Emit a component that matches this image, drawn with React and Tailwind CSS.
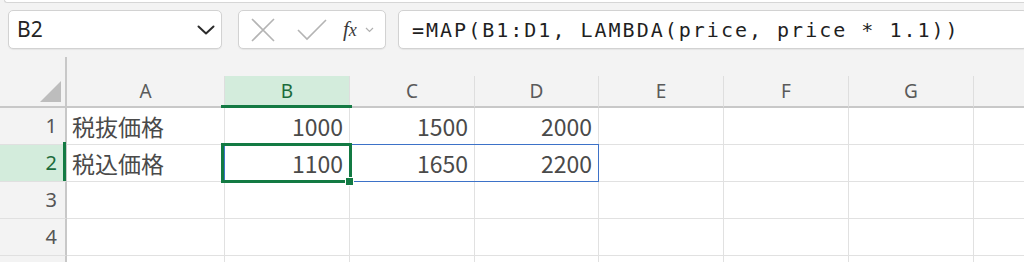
import React from 'react';

const columns = [
  { key: 'A', width: 158 },
  { key: 'B', width: 125 },
  { key: 'C', width: 125 },
  { key: 'D', width: 124 },
  { key: 'E', width: 125 },
  { key: 'F', width: 125 },
  { key: 'G', width: 125 },
  { key: 'H', width: 200, hidden: true },
];

const rows = [
  { n: 1, cells: { A: '税抜価格', B: '1000', C: '1500', D: '2000' } },
  { n: 2, cells: { A: '税込価格', B: '1100', C: '1650', D: '2200' } },
  { n: 3, cells: {} },
  { n: 4, cells: {} },
  { n: 5, cells: {}, hidden: true },
];

const cellFont = { fontFamily: '"Noto Sans CJK JP", "Noto Sans", sans-serif' };

function Toolbar() {
  return (
    <div className="mt-[7px] flex h-[39px] items-stretch pl-[8px]">
      <div className="flex w-[214px] items-center justify-between rounded-[5px] border border-[#d2d2d2] bg-white pl-[8px] pr-[6px] shadow-[0_1px_1px_rgba(0,0,0,0.06)]">
        <span className="text-[21px] text-[#242424]" style={{ fontFamily: '"Noto Sans", sans-serif' }}>B2</span>
        <svg width="18" height="10" viewBox="0 0 18 10" fill="none">
          <path d="M1.5 1.5 L9 8.5 L16.5 1.5" stroke="#2b2b2b" strokeWidth="2" strokeLinecap="round" strokeLinejoin="round" />
        </svg>
      </div>
      <div className="ml-[16px] flex w-[148px] items-center rounded-[5px] border border-[#d2d2d2] bg-white shadow-[0_1px_1px_rgba(0,0,0,0.06)]">
        <svg className="ml-[12px]" width="24" height="24" viewBox="0 0 24 24" fill="none">
          <path d="M1 1 L23 23 M23 1 L1 23" stroke="#b4b4b4" strokeWidth="1.6" />
        </svg>
        <svg className="ml-[22px]" width="30" height="22" viewBox="0 0 30 22" fill="none">
          <path d="M1 11 L10 20 L29 1" stroke="#b4b4b4" strokeWidth="1.6" />
        </svg>
        <span
          className="ml-[16px] text-[21px] italic leading-none text-[#3a3a3a]"
          style={{ fontFamily: '"Liberation Serif", serif' }}
        >
          f<span className="text-[18px]">x</span>
        </span>
        <svg className="ml-[8px]" width="9" height="6" viewBox="0 0 9 6" fill="none">
          <path d="M1 1 L4.5 4.5 L8 1" stroke="#b0b0b0" strokeWidth="1.2" />
        </svg>
      </div>
      <div className="-mr-[4px] ml-[12px] flex flex-1 items-center rounded-[5px] border border-[#d2d2d2] bg-white pl-[13px] shadow-[0_1px_1px_rgba(0,0,0,0.06)]">
        <span
          className="whitespace-nowrap text-[20px] tracking-[2px] text-[#1f1f1f]"
          style={{ fontFamily: '"DejaVu Sans Mono", monospace' }}
        >
          =MAP(B1:D1, LAMBDA(price, price * 1.1))
        </span>
      </div>
    </div>
  );
}

function HeaderRow() {
  return (
    <div className="flex h-[59px] items-end">
      <div className="flex h-[51px] w-[67px] shrink-0 items-end justify-end border-b-2 border-r-2 border-[#c8c8c8] pb-[4px] pr-[4px]">
        <div className="h-[21px] w-[21px] bg-[#bdbdbd] [clip-path:polygon(100%_0,100%_100%,0_100%)]" />
      </div>
      {columns.map((col) => {
        const active = col.key === 'B';
        return (
          <div
            key={col.key}
            style={{ width: col.width }}
            className={`relative flex h-[32px] shrink-0 items-center justify-center border-b-2 border-r border-b-[#c8c8c8] border-r-[#dedede] text-[19px] ${
              active ? 'bg-[#d3ecdc] text-[#1b6b3b]' : 'text-[#5a5a5a]'
            }`}
          >
            {!col.hidden && (
              <span style={{ fontFamily: '"Noto Sans", sans-serif' }} className="pt-[1px]">{col.key}</span>
            )}
            {active && (
              <div className="absolute -bottom-[2px] -left-[4px] z-10 h-[3px] w-[131px] bg-[#137a43]" />
            )}
          </div>
        );
      })}
    </div>
  );
}

function GridRow({ row }) {
  const active = row.n === 2;
  return (
    <div className="flex h-[37px]">
      <div
        className={`relative flex w-[67px] shrink-0 items-center justify-end border-b border-r-2 border-b-[#e0e0e0] border-r-[#c8c8c8] pr-[8px] text-[20px] ${
          active ? 'bg-[#d3ecdc] text-[#1b6b3b]' : 'text-[#555555]'
        }`}
        style={{ fontFamily: '"Noto Sans", sans-serif' }}
      >
        {!row.hidden && row.n}
        {active && <div className="absolute -right-[1px] -top-[3px] bottom-0 z-10 w-[3px] bg-[#137a43]" />}
      </div>
      {columns.map((col) => {
        const value = row.cells[col.key];
        const isText = col.key === 'A';
        return (
          <div
            key={col.key}
            style={{ width: col.width, ...cellFont }}
            className={`relative flex shrink-0 items-center border-b border-r border-[#e1e1e1] bg-white text-[23px] text-[#4a4a4a] ${
              isText ? 'justify-start pl-[5px]' : 'justify-end pr-[6px]'
            }`}
          >
            {value}
            {active && col.key === 'B' && (
              <>
                <div className="absolute -left-[1px] -top-[1px] z-10 h-[38px] w-[375px] border border-[#3d72c8]" />
                <div className="absolute -left-[4px] -top-[2px] z-20 h-[40px] w-[131px] border-[3px] border-[#137a43]" />
                <div className="absolute left-[120px] top-[32px] z-30 h-[9px] w-[9px] border border-white bg-[#137a43]" />
              </>
            )}
          </div>
        );
      })}
    </div>
  );
}

export default function App() {
  return (
    <div className="h-[262px] w-[1024px] overflow-hidden bg-[#f3f3f3]">
      <div className="ml-[4px] h-[3px] rounded-bl-[5px] border-b border-l border-[#d6d6d6] bg-white" />
      <Toolbar />
      <HeaderRow />
      {rows.map((row) => (
        <GridRow key={row.n} row={row} />
      ))}
    </div>
  );
}
